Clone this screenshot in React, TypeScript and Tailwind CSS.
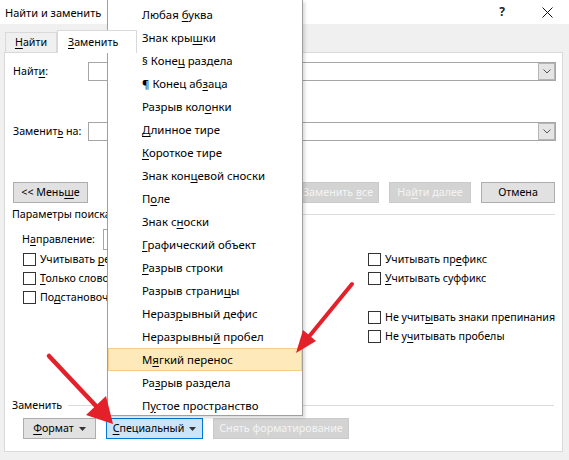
import React from "react";

const Acc = ({ s }: { s: string }) => {
  const i = s.indexOf("&");
  if (i < 0) return <span className="whitespace-pre">{s}</span>;
  return (
    <span className="whitespace-pre">
      {s.slice(0, i)}
      <span className="underline decoration-1 underline-offset-[2px]">{s[i + 1]}</span>
      {s.slice(i + 2)}
    </span>
  );
};

const Chevron = () => (
  <svg width="8" height="5" viewBox="0 0 8 5">
    <path d="M0.5 0.5 L4 4 L7.5 0.5" fill="none" stroke="#555" strokeWidth="1" />
  </svg>
);

const Combo = () => (
  <div className="flex-1 h-[19px] border border-[#a6a6a6] bg-white flex justify-end">
    <div className="w-[17px] h-[17px] bg-[#e5e5e5] border border-[#b5b5b5] flex items-center justify-center">
      <Chevron />
    </div>
  </div>
);

const Btn = ({ children, w, disabled }: { children: React.ReactNode; w: string; disabled?: boolean }) => (
  <div
    className={
      "h-[21px] flex items-center justify-center border whitespace-nowrap shrink-0 " +
      w +
      (disabled ? " bg-[#d3d3d3] border-[#cacaca] text-[#f3f3f3]" : " bg-[#e1e1e1] border-[#adadad]")
    }
  >
    {children}
  </div>
);

const Check = ({ label }: { label: string }) => (
  <div className="h-[19px] flex items-center gap-[4px] whitespace-nowrap">
    <div className="w-[13px] h-[13px] border border-[#333] bg-white shrink-0" />
    <Acc s={label} />
  </div>
);

const Caret = () => (
  <svg width="7" height="4" viewBox="0 0 7 4" className="ml-[5px]">
    <path d="M0 0 L7 0 L3.5 4 Z" fill="#333" />
  </svg>
);

const menuItems = [
  "Любая &буква",
  "Знак кры&шки",
  "§ Коне&ц раздела",
  "¶ Конец аб&заца",
  "Разрыв кол&онки",
  "&Длинное тире",
  "&Короткое тире",
  "Знак кон&цевой сноски",
  "П&оле",
  "Знак с&носки",
  "&Графический объект",
  "&Разрыв строки",
  "Разрыв страни&цы",
  "Нераз&рывный дефис",
  "Неразрывны&й пробел",
  "М&ягкий перенос",
  "Ра&зрыв раздела",
  "П&устое пространство",
];

export default function App() {
  return (
    <div className="relative w-[569px] h-[460px] overflow-hidden bg-[#f0f0f0] text-[10.7px] leading-none text-black font-['Noto_Sans',sans-serif]">
      {/* title bar */}
      <div className="h-[24px] bg-white flex items-center pl-[5px] pr-[16px]">
        <span className="text-[11px]">Найти и заменить</span>
        <div className="ml-auto flex items-center gap-[37px]">
          <span className="text-[12px] font-bold text-[#222]">?</span>
          <svg width="11" height="11" viewBox="0 0 11 11">
            <path d="M0.5 0.5 L10.5 10.5 M10.5 0.5 L0.5 10.5" stroke="#111" strokeWidth="1" />
          </svg>
        </div>
      </div>

      {/* tabs */}
      <div className="h-[28px] flex items-end pl-[5px]">
        <div className="h-[20px] w-[52px] flex items-center justify-center border border-b-0 border-[#d9d9d9]">
          <Acc s="&Найти" />
        </div>
        <div className="relative z-10 -mb-px h-[23px] w-[80px] flex items-center pl-[10px] bg-white border border-b-0 border-[#d9d9d9]">
          <Acc s="&Заменить" />
        </div>
      </div>

      {/* panel */}
      <div className="ml-[4px] w-[559px] h-[400px] bg-white border border-[#d9d9d9] flex flex-col pt-[9px] pl-[7px] pr-[6px]">
        <div className="flex items-center h-[19px]">
          <div className="w-[76px] shrink-0 whitespace-nowrap pl-[1px]">
            <Acc s="Найт&и:" />
          </div>
          <Combo />
        </div>
        <div className="flex items-center h-[19px] mt-[41px]">
          <div className="w-[76px] shrink-0 whitespace-nowrap pl-[1px]">
            <Acc s="Заменит&ь на:" />
          </div>
          <Combo />
        </div>

        <div className="flex items-center h-[21px] mt-[41px] pl-[1px] pr-[1px]">
          <Btn w="w-[75px]">
            <Acc s="<< Мень&ше" />
          </Btn>
          <div className="ml-auto flex gap-[10px]">
            <Btn w="w-[82px]" disabled>
              <Acc s="&Заменить" />
            </Btn>
            <Btn w="w-[82px]" disabled>
              <Acc s="Заменить &все" />
            </Btn>
            <Btn w="w-[82px]" disabled>
              <Acc s="На&йти далее" />
            </Btn>
            <Btn w="w-[74px]">Отмена</Btn>
          </div>
        </div>

        <div className="flex items-center h-[14px] mt-[4px] pr-[1px]">
          <span className="whitespace-nowrap">Параметры поиска</span>
          <div className="flex-1 h-px bg-[#dcdcdc] ml-[6px]" />
        </div>

        <div className="pl-[10px]">
          <div className="flex items-center h-[21px] mt-[8px]">
            <div className="w-[81px] shrink-0 whitespace-nowrap">
              <Acc s="Н&аправление:" />
            </div>
            <div className="w-[100px] h-[21px] border border-[#a6a6a6] bg-white" />
          </div>
          <div className="flex items-start">
            <div className="w-[346px] shrink-0 pl-[1px] flex flex-col">
              <Check label="Учитывать &регистр" />
              <Check label="&Только слово целиком" />
              <Check label="По&дстановочные знаки" />
            </div>
            <div className="flex flex-col">
              <Check label="Учитывать пр&ефикс" />
              <Check label="&Учитывать суффикс" />
              <div className="h-[20px]" />
              <Check label="Не учит&ывать знаки препинания" />
              <Check label="Не у&читывать пробелы" />
            </div>
          </div>
        </div>

        <div className="flex items-center h-[14px] mt-[52px] pr-[2px]">
          <span>Заменить</span>
          <div className="flex-1 h-px bg-[#dcdcdc] ml-[6px]" />
        </div>

        <div className="flex items-center h-[21px] mt-[6px] pl-[11px] gap-[10px]">
          <Btn w="w-[73px]">
            <Acc s="&Формат" />
            <Caret />
          </Btn>
          <div className="h-[21px] w-[97px] shrink-0 flex items-center justify-center border border-[#0078d7] bg-[#cce4f7]">
            <Acc s="&Специальный" />
            <Caret />
          </div>
          <Btn w="w-[136px]" disabled>
            <Acc s="Снять форматирование" />
          </Btn>
        </div>
      </div>

      {/* dropdown menu */}
      <div className="absolute left-[107px] top-0 w-[196px] h-[416px] overflow-hidden bg-white border border-t-0 border-[#a0a0a0] pt-[3px] text-[11.4px] shadow-[2px_2px_3px_rgba(0,0,0,0.15)]">
        {menuItems.map((m, i) => (
          <div
            key={m}
            className={
              "h-[23px] flex items-center pl-[33px] whitespace-nowrap border " +
              (i === 15 ? "bg-[#fde9b9] border-[#f3d08a]" : "border-transparent")
            }
          >
            <Acc s={m} />
          </div>
        ))}
      </div>

      {/* red arrows */}
      <svg className="absolute inset-0 pointer-events-none" width="569" height="460" viewBox="0 0 569 460">
        <line x1="352" y1="284" x2="307" y2="339" stroke="#e3212b" strokeWidth="4" strokeLinecap="round" />
        <polygon points="296,353 316,341 303,330" fill="#e3212b" />
        <line x1="49" y1="356" x2="96" y2="406" stroke="#e3212b" strokeWidth="4.5" strokeLinecap="round" />
        <polygon points="113,424 106,396 86,415" fill="#e3212b" />
      </svg>
    </div>
  );
}
